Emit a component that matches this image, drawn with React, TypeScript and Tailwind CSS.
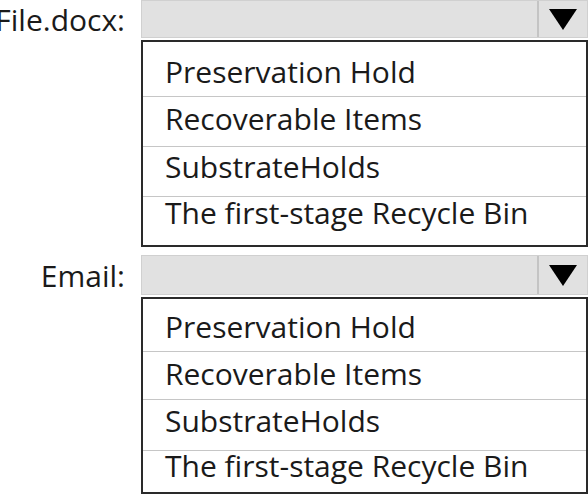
const OPTIONS = [
  'Preservation Hold',
  'Recoverable Items',
  'SubstrateHolds',
  'The first-stage Recycle Bin',
]

function Caret() {
  return (
    <svg width="28" height="21" viewBox="0 0 28 21" aria-hidden="true">
      <polygon points="0,0 28,0 14,21" fill="#000" />
    </svg>
  )
}

type Props = { label: string; barHeight: string; rows: string[] }

function Dropdown({ label, barHeight, rows }: Props) {
  return (
    <div className="flex">
      {/* label column */}
      <div className={`w-[141px] shrink-0 ${barHeight} flex items-center justify-end pr-[16px] text-[30px] text-[#1a1a1a]`}>
        {label}
      </div>
      <div className="flex-1 flex flex-col">
        {/* closed select */}
        <div className={`${barHeight} flex bg-[#e1e1e1] border border-[#d0d0d0]`}>
          <div className="flex-1" />
          <div className="w-[50px] flex items-center justify-center border-l-2 border-[#c4c4c4]">
            <Caret />
          </div>
        </div>
        {/* open list */}
        <ul className="mt-[2px] border-2 border-[#2a2a2a] bg-white">
          {OPTIONS.map((opt, i) => (
            <li
              key={opt}
              className={`${rows[i]} flex items-center pl-[22px] text-[30px] leading-none text-[#1a1a1a] ${
                i < OPTIONS.length - 1 ? 'border-b border-[#c6c6c6]' : ''
              }`}
            >
              {opt}
            </li>
          ))}
        </ul>
      </div>
    </div>
  )
}

export default function App() {
  return (
    <div className="w-[588px] h-[503px] bg-white overflow-hidden font-['Open_Sans',sans-serif]">
      <Dropdown
        label="File.docx:"
        barHeight="h-[38px]"
        rows={['h-[55px] pt-[6px]', 'h-[50px] pb-[6px]', 'h-[50px] pb-[10px]', 'h-[48px] pb-[16px]']}
      />
      <div className="h-[8px]" />
      <Dropdown
        label="Email:"
        barHeight="h-[40px]"
        rows={['h-[53px] pt-[4px]', 'h-[48px] pb-[4px]', 'h-[51px] pb-[8px]', 'h-[41px] pb-[12px]']}
      />
    </div>
  )
}
